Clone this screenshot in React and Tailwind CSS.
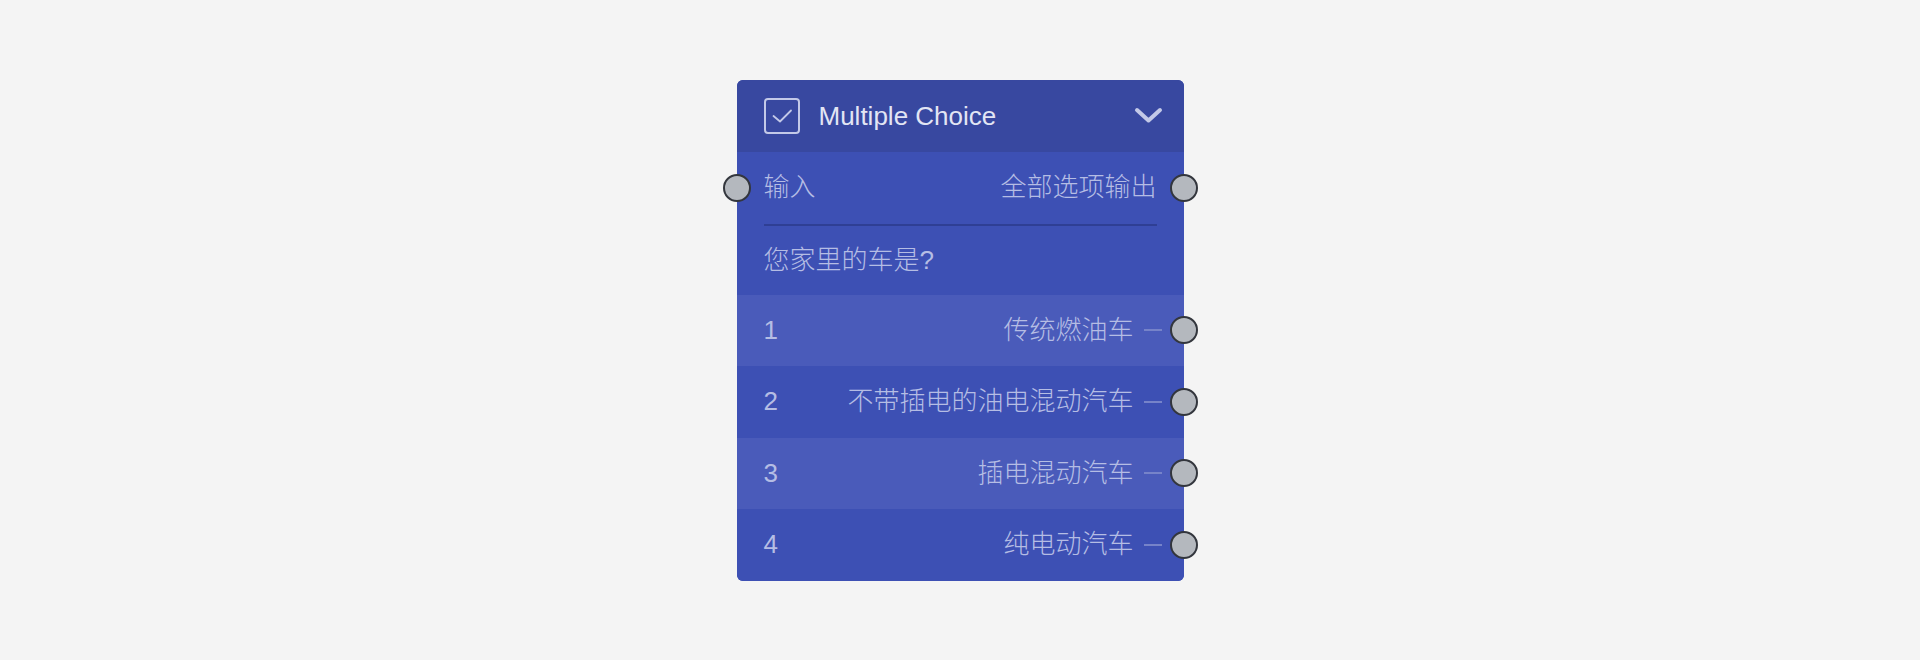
import React from "react";

const options = [
  { n: "1", label: "传统燃油车", alt: true },
  { n: "2", label: "不带插电的油电混动汽车", alt: false },
  { n: "3", label: "插电混动汽车", alt: true },
  { n: "4", label: "纯电动汽车", alt: false },
];

const Port = ({ side }) => (
  <span
    className={`absolute top-1/2 -translate-y-1/2 w-[28px] h-[28px] rounded-full bg-[#b4b8be] border-2 border-[#33363d] ${
      side === "left" ? "left-0 -translate-x-1/2" : "right-0 translate-x-1/2"
    }`}
  />
);

const App = () => {
  return (
    <div
      className="w-full h-[660px] bg-[#f4f4f4] flex items-center justify-center"
      style={{ fontFamily: '"Liberation Sans", "Noto Sans CJK SC", sans-serif' }}
    >
      <div className="relative w-[447px] rounded-[6px] bg-[#3d50b4]">
        {/* header */}
        <div className="h-[72px] rounded-t-[6px] bg-[#3848a0] flex items-center px-[27px]">
          <svg width="36" height="36" viewBox="0 0 36 36" className="shrink-0">
            <rect x="1" y="1" width="34" height="34" rx="3" fill="none" stroke="#c3c9e8" strokeWidth="2" />
            <path d="M9.5 18 L16 23.5 L27 12.5" fill="none" stroke="#c3c9e8" strokeWidth="1.8" strokeLinecap="round" strokeLinejoin="round" />
          </svg>
          <span className="ml-[19px] text-[26px] text-[#e2e5f4] leading-none">Multiple Choice</span>
          <svg width="30" height="20" viewBox="0 0 30 20" className="ml-auto mr-[-6px]">
            <path d="M4 4 L15.5 14.5 L27 4" fill="none" stroke="#c3c9e8" strokeWidth="4" strokeLinecap="round" strokeLinejoin="round" />
          </svg>
        </div>

        {/* input row */}
        <div className="relative h-[72px] flex items-center justify-between px-[27px] text-[26px] font-light text-[#b5bde4]">
          <Port side="left" />
          <span>输入</span>
          <span>全部选项输出</span>
          <Port side="right" />
        </div>
        <div className="mx-[27px] h-[2px] bg-[#2f3f94]" />
        <div className="h-[69px] flex items-center px-[27px] text-[26px] font-light text-[#b5bde4]">
          您家里的车是?
        </div>

        {/* options */}
        {options.map((o, i) => (
          <div
            key={o.n}
            className={`relative h-[71.5px] flex items-center pl-[27px] pr-[22px] text-[26px] font-light text-[#b5bde4] ${
              o.alt ? "bg-[#4a5bba]" : "bg-[#3d50b4]"
            } ${i === options.length - 1 ? "rounded-b-[6px]" : ""}`}
          >
            <span>{o.n}</span>
            <span className="ml-auto">{o.label}</span>
            <span className="ml-[10px] w-[18px] h-[2px] bg-[#7683c9]" />
            <Port side="right" />
          </div>
        ))}
      </div>
    </div>
  );
};

export default App;
